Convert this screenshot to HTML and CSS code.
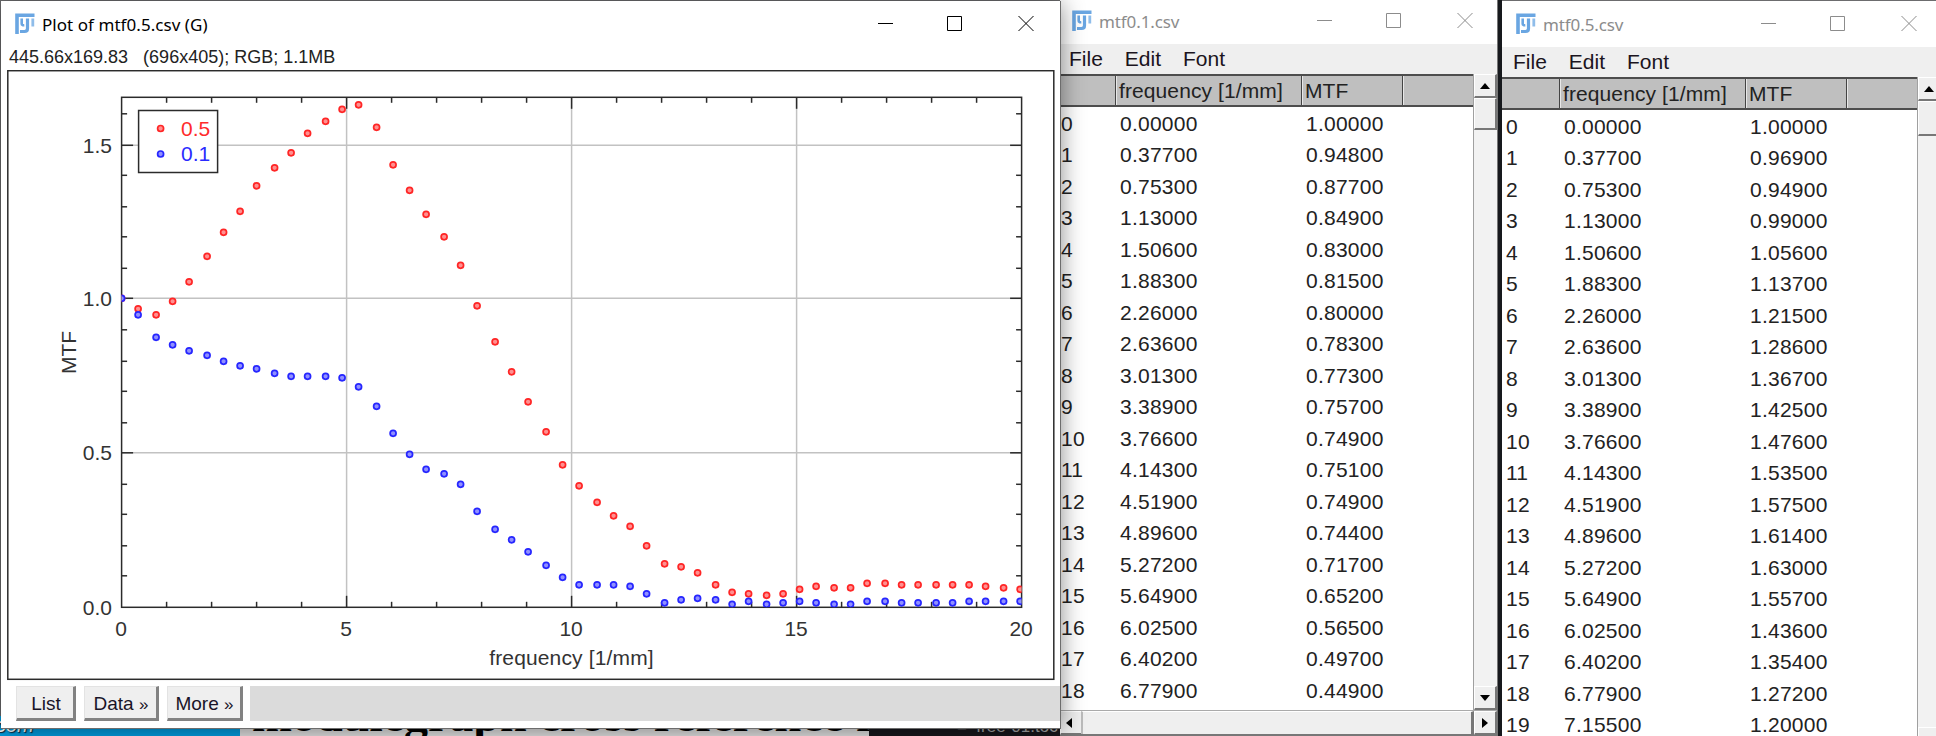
FILE: index.html
```
<!DOCTYPE html>
<html lang="en">
<head>
<meta charset="utf-8">
<title>Plot of mtf0.5.csv (G)</title>
<link rel="stylesheet" href="styles.css">
</head>
<body>
<svg class="defs" width="0" height="0">
  <symbol id="fiji" viewBox="0 0 20 21">
    <path d="M2 21V2.2h17.5" fill="none" stroke="#6aa6e2" stroke-width="3.6"/>
    <path d="M6.7 5.5v5.2q0 1.8 2.6 1.6" fill="none" stroke="#6aa6e2" stroke-width="2.6"/>
    <path d="M12.5 5.5v10q0 3-3 3H5" fill="none" stroke="#6aa6e2" stroke-width="3.2"/>
    <path d="M17.8 5.5v8" fill="none" stroke="#8fbdea" stroke-width="2.8"/>
  </symbol>
  <symbol id="controls" viewBox="0 0 160 17">
    <path d="M0 8.5h15M69.5 1.5h14v14h-14zM140.500 1l15 15M155.500 1l-15 15" fill="none" stroke="currentColor"/>
  </symbol>
</svg>
<div class="desktop">
  <div class="strip">
    <div class="strip-blue"><span>com</span></div>
    <div class="strip-page"><span>modulegraph cross reference f</span></div>
    <div class="strip-dark"><span>= &nbsp;free-01.toc</span></div>
  </div>
  <div class="gutter"></div>

  <section class="window table-window first">
    <header class="titlebar"><svg class="logo"><use href="#fiji"/></svg><span class="title">mtf0.1.csv</span><svg class="controls"><use href="#controls"/></svg></header>
    <nav class="menu"><span>File</span><span>Edit</span><span>Font</span></nav>
    <div class="body">
      <div class="sheet">
        <div class="row head"><span></span><span>frequency [1/mm]</span><span>MTF</span><span></span></div>
        <div class="rows" id="rows1"></div>
      </div>
      <div class="vbar"><i class="btn"><b class="up"></b></i><i class="thumb"></i><i class="track"></i><i class="btn last"><b class="down"></b></i></div>
    </div>
    <div class="hbar"><i class="btn"><b class="left"></b></i><i class="hthumb"></i><i class="btn"><b class="right"></b></i></div>
  </section>

  <section class="window table-window second">
    <header class="titlebar"><svg class="logo"><use href="#fiji"/></svg><span class="title">mtf0.5.csv</span><svg class="controls"><use href="#controls"/></svg></header>
    <nav class="menu"><span>File</span><span>Edit</span><span>Font</span></nav>
    <div class="body">
      <div class="sheet">
        <div class="row head"><span></span><span>frequency [1/mm]</span><span>MTF</span><span></span></div>
        <div class="rows" id="rows2"></div>
      </div>
      <div class="vbar"><i class="btn"><b class="up"></b></i><i class="thumb"></i><i class="track"></i><i class="btn last"><b class="down"></b></i></div>
    </div>
  </section>

  <section class="window plot-window">
    <header class="titlebar"><svg class="logo"><use href="#fiji"/></svg><span class="title">Plot of mtf0.5.csv (G)</span><svg class="controls"><use href="#controls"/></svg></header>
    <div class="info">445.66x169.83 &nbsp; (696x405); RGB; 1.1MB</div>
    <svg class="plot" id="plot" viewBox="7 70 1048 611"></svg>
    <footer class="actions"><span class="button list">List</span><span class="button data">Data <small>»</small></span><span class="button more">More <small>»</small></span><span class="status"></span></footer>
  </section>
</div>
<script src="app.js"></script>
</body>
</html>
```
FILE: styles.css
```
* { box-sizing: border-box; }
body { margin: 0; width: 1936px; height: 736px; overflow: hidden; font-family: "Liberation Sans", Arial, sans-serif; }
.defs { position: absolute; }
.desktop { position: relative; width: 1936px; height: 736px; overflow: hidden; background: #6c6c6e; }

.strip { position: absolute; left: 0; top: 716px; display: flex; width: 1060px; height: 20px; overflow: hidden; }
.strip span { display: block; white-space: nowrap; }
.strip-blue { width: 240px; background: #009fe3; }
.strip-blue span { margin: -1px 0 0 -4px; font: italic 20px/20px "Liberation Sans", sans-serif; color: #fff; text-shadow: 1px 1px 1px #123; }
.strip-page { width: 629px; background: #e3e3e3; overflow: hidden; }
.strip-page span { margin: -25px 0 0 12px; font: bold 48px/48px "Liberation Serif", serif; color: #000; }
.strip-dark { width: 191px; background: #17171c; }
.strip-dark span { margin: 1px 0 0 88px; font: 17px/20px "Liberation Sans", sans-serif; color: #a8a8a8; }
.gutter { position: absolute; left: 1498px; top: 0; width: 4px; height: 736px; background: #17191d; }

.window { position: absolute; display: flex; flex-direction: column; background: #fff; }
.titlebar { display: flex; align-items: flex-start; flex: none; }
.logo { flex: none; width: 20px; height: 21px; }
.title { font-family: "Noto Sans", "Open Sans", sans-serif; white-space: pre; }
.controls { flex: none; width: 160px; height: 17px; margin-left: auto; }

.plot-window { left: 1px; top: 1px; width: 1060px; height: 728px; border-right: 1px solid #6d6d6d; border-bottom: 1px solid #6d6d6d; box-shadow: 0 2px 22px rgba(0,0,0,.45); }
.plot-window .titlebar { height: 44px; padding: 12px 22px 0 14px; }
.plot-window .title { margin: 0 0 0 7px; font-size: 17px; line-height: 24px; letter-spacing: .05px; color: #000; }
.plot-window .controls { margin-top: 2px; }
.info { height: 25px; padding-left: 8px; font-size: 18px; line-height: 25px; color: #222; white-space: pre; }
.plot { display: block; flex: none; width: 1048px; height: 611px; margin-left: 6px; }
.plot text { font-size: 21px; fill: #333; }
.actions { display: flex; height: 47px; padding: 5px 0 0 15px; }
.button { height: 35px; margin-right: 8px; border: solid; border-width: 1px 3px 3px 1px; border-color: #e3e3e3 #828282 #828282 #e3e3e3; background: #efefef; font-size: 19px; line-height: 33px; text-align: center; color: #191428; white-space: nowrap; }
.button small { font-size: 17px; }
.list { width: 60px; padding-left: 2px; }
.data { width: 75px; padding-left: 1px; }
.more { width: 76px; padding-left: 1px; margin-right: 7px; }
.status { flex: 1; height: 35px; background: #dbdbdb; }

.first { left: 1060px; top: 0; width: 438px; height: 736px; border-right: 1px solid #777; }
.second { left: 1502px; top: 1px; width: 456px; height: 750px; }
.table-window .titlebar { padding-top: 10px; }
.table-window .title { margin-left: 7px; font-size: 17px; line-height: 24px; color: #8c8c8c; letter-spacing: -.1px; }
.table-window .controls { color: #8c8c8c; margin-top: 2px; }
.first .titlebar { height: 44px; padding-left: 12px; padding-right: 20px; }
.second .titlebar { height: 46px; padding-left: 14px; padding-right: 37px; padding-top: 12px; }
.menu { display: flex; flex: none; gap: 22px; height: 30px; padding-left: 9px; background: #efefef; font-size: 21px; line-height: 30px; color: #1b1420; }
.second .menu { padding-left: 11px; }
.body { display: flex; flex: 1; min-height: 0; }
.sheet { flex: 1; min-width: 0; overflow: hidden; }
.row { display: grid; grid-template-columns: 56px 186px 101px 1fr; height: 31.5px; font-size: 21px; line-height: 32px; color: #222; white-space: nowrap; }
.second .row { grid-template-columns: 58px 186px 101px 1fr; }
.head { height: 33px; background: #bfbfbf; border-top: 2px solid #4d4d4d; border-bottom: 2px solid #4d4d4d; line-height: 29px; }
.head span { padding-left: 2px; letter-spacing: .1px; border-right: 1px solid #444; border-left: 1px solid #e8e8e8; }
.head span:first-child { border-left: 0; }
.head span:last-child { border-right: 0; }
.rows .row span { padding-left: 4px; letter-spacing: .25px; }
.rows .row span:first-child { padding-left: 1px; }
.second .rows .row span:first-child { padding-left: 4px; }
.rows { padding-top: .5px; }
.vbar { display: flex; flex-direction: column; width: 24px; background: #f2f2f2; border-left: 1px solid #a0a0a0; }
.second .vbar { width: 41px; padding-right: 17px; }
.btn { display: flex; align-items: center; justify-content: center; flex: none; width: 23px; height: 24px; background: #efefef; border: solid; border-width: 1px 2px 2px 1px; border-color: #fff #777 #777 #fff; }
.thumb { flex: none; height: 32px; background: #efefef; border: solid; border-width: 1px 2px 2px 1px; border-color: #fff #777 #777 #fff; }
.second .thumb { height: 35px; }
.track { flex: 1; }
.btn b { width: 0; height: 0; border: 5.5px solid transparent; }
.btn .up { border-top: 0; border-bottom: 6.5px solid #000; }
.btn .down { border-bottom: 0; border-top: 6.5px solid #000; }
.btn .left { border-left: 0; border-right: 6.5px solid #000; }
.btn .right { border-right: 0; border-left: 6.5px solid #000; }
.hbar { display: flex; flex: none; height: 26px; border-top: 1px solid #aaa; border-bottom: 2px solid #777; background: #efefef; }
.hthumb { flex: 1; background: #efefef; border: solid; border-width: 1px 3px 0 2px; border-color: #fff #777 #777 #bbb; }
.hbar .btn:first-child { width: 21px; border-right-width: 0; padding-right: 5px; }
```
FILE: app.js
```
const mtf01 = [1,.948,.877,.849,.83,.815,.8,.783,.773,.757,.749,.751,.749,.744,.717,.652,.565,.497,.449,.434,.4,.312,.253,.22,.181,.136,.097,.0735,.0735,.0735,.069,.044,.015,.025,.029,.025,.01,.0195,.01,.015,.0195,.015,.01,.01,.0195,.0195,.015,.015,.015,.015,.0195,.0195,.0195,.0195];
const mtf05 = [1,.969,.949,.99,1.056,1.137,1.215,1.286,1.367,1.425,1.476,1.535,1.575,1.614,1.63,1.557,1.436,1.354,1.272,1.2,1.11,.98,.862,.765,.668,.57,.463,.395,.341,.297,.264,.2,.1416,.132,.1125,.0735,.0487,.044,.039,.044,.058,.069,.064,.064,.078,.078,.0735,.0735,.0735,.0735,.0735,.069,.064,.058];
const freq = [0,.377,.753,1.13,1.506,1.883,2.26,2.636,3.013,3.389,3.766,4.143,4.519,4.896,5.272,5.649,6.025,6.402,6.779,7.155];

// Tables
const fill = (id, data, n) => {
  document.getElementById(id).innerHTML = freq.slice(0, n).map((f, i) =>
    `<div class="row"><span>${i}</span><span>${f.toFixed(5)}</span><span>${data[i].toFixed(5)}</span><span></span></div>`).join("");
};
fill("rows1", mtf01, 19);
fill("rows2", mtf05, 20);

// Plot, snapped to the 1.5px grid of the magnified canvas
const X = v => 121.6 + 1.5 * Math.round(v * 30.015);
const Y = v => 607.3 - 1.5 * Math.round(v * 205.6);
const line = (x1, y1, x2, y2, c) => `<path d="M${x1} ${y1}L${x2} ${y2}" stroke="${c}" stroke-width="1.5"/>`;
const L = X(0), R = X(20), T = 97.3, B = 607.3, ink = "#2b2b2b";
let s = `<rect x="7.8" y="70.7" width="1046" height="608.6" fill="#fff" stroke="${ink}" stroke-width="1.5"/>`;
for (const v of [5, 10, 15]) s += line(X(v), T, X(v), B, "#c2c2c2");
for (const v of [.5, 1, 1.5]) s += line(L, Y(v), R, Y(v), "#c2c2c2");
for (let v = 1; v < 20; v++) {
  const t = v % 5 ? 5.5 : 11.5;
  s += line(X(v), T, X(v), T + t, ink) + line(X(v), B, X(v), B - t, ink);
}
for (let k = 1; k <= 16; k++) {
  const t = k % 5 ? 5.5 : 11.5, y = Y(k / 10);
  s += line(L, y, L + t, y, ink) + line(R, y, R - t, y, ink);
}
const dot = (x, y, c, f) => `<circle cx="${x}" cy="${y}" r="3" fill="${f}" stroke="${c}" stroke-width="1.7"/>`;
const red = ["#ff2626", "#ff9090"], blue = ["#2626ff", "#9090ff"];
s += `<clipPath id="c"><rect x="${L}" y="${T}" width="${R - L}" height="${B - T}"/></clipPath>`;
s += `<rect x="${L}" y="${T}" width="${R - L}" height="${B - T}" fill="none" stroke="${ink}" stroke-width="1.5"/><g clip-path="url(#c)">`;
mtf05.forEach((v, i) => s += dot(X(i * .3766), Y(v), ...red));
mtf01.forEach((v, i) => s += dot(X(i * .3766), Y(v), ...blue));
s += `</g><rect x="138.6" y="110.5" width="79" height="62" fill="#fff" stroke="${ink}" stroke-width="1.5"/>`;
s += dot(160.6, 128.5, ...red) + dot(160.6, 154, ...blue);
s += `<text x="181" y="135.500" style="fill:#ff2b2b">0.5</text><text x="181" y="161" style="fill:#2b2bff">0.1</text>`;
for (const v of [0, .5, 1, 1.5]) s += `<text x="112" y="${Y(v) + 7.5}" text-anchor="end">${v.toFixed(1)}</text>`;
for (const v of [0, 5, 10, 15, 20]) s += `<text x="${X(v) - .5}" y="636" text-anchor="middle">${v}</text>`;
s += `<text x="571.500" y="665" text-anchor="middle" letter-spacing=".15">frequency [1/mm]</text>`;
s += `<text transform="translate(75.500 352.500) rotate(-90)" text-anchor="middle">MTF</text>`;
document.getElementById("plot").innerHTML = s;
```
